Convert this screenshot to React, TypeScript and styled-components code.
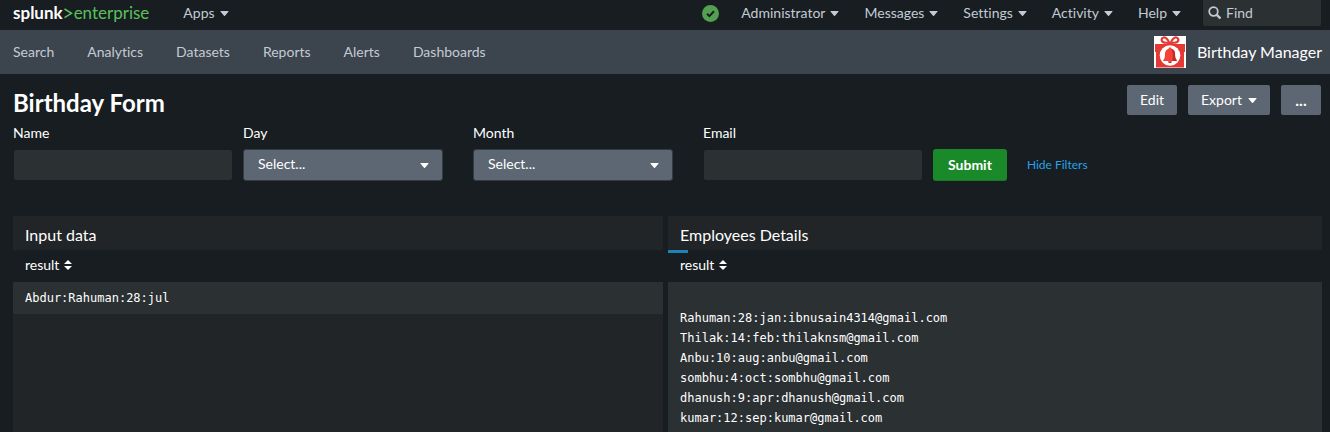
import React from 'react';
import styled, { createGlobalStyle } from 'styled-components';

const GlobalStyle = createGlobalStyle`
  * { box-sizing: border-box; }
  html { scrollbar-width: none; background: #171d21; }
  body { margin: 0; font-variant-ligatures: none; }
  body, button, input, select {
    font-family: Lato, "Liberation Sans", sans-serif;
    font-size: 14px;
    line-height: 20px;
  }
`;

const Page = styled.div`
  min-height: 100vh;
  display: flex;
  flex-direction: column;
  background: #171d21;
  color: #ffffff;
`;

const TopBar = styled.header`
  display: flex;
  justify-content: space-between;
  height: 30px;
  padding: 0 9px 0 13px;
  color: #c3cbd4;
`;

const BarGroup = styled.div<{ $gap: number }>`
  display: flex;
  align-items: center;
  gap: ${(p) => p.$gap}px;
  height: 26px;
`;

const Brand = styled.a`
  display: flex;
  align-items: center;
  font-size: 17px;
  line-height: 24px;
  color: #5cc05c;
  text-decoration: none;
`;

const BrandName = styled.strong`
  color: #ffffff;
  font-weight: 700;
`;

const MenuButton = styled.button`
  display: flex;
  align-items: center;
  gap: 5px;
  padding: 0;
  border: 0;
  background: none;
  color: inherit;
  font-variant-ligatures: none;
`;

const Health = styled.button`
  display: flex;
  padding: 0;
  border: 0;
  background: none;
`;

const FindBox = styled.label`
  display: flex;
  align-items: center;
  gap: 4px;
  width: 118px;
  height: 26px;
  padding-left: 5px;
  border-radius: 0 0 2px 2px;
  background: #2b3033;
`;

const FindInput = styled.input`
  flex: 1;
  min-width: 0;
  padding: 0;
  border: 0;
  outline: 0;
  background: none;
  color: inherit;
  &::placeholder { color: #c3cbd4; opacity: 1; }
`;

const AppBar = styled.div`
  display: flex;
  align-items: center;
  justify-content: space-between;
  height: 44px;
  padding: 0 8px 0 13px;
  background: #3c444d;
`;

const AppNav = styled.nav`
  display: flex;
  gap: 33px;
`;

const NavLink = styled.a`
  color: #c3cbd4;
  text-decoration: none;
`;

const AppName = styled.a`
  display: flex;
  align-items: center;
  gap: 11px;
  color: #ffffff;
  font-size: 16px;
  text-decoration: none;
`;

const TitleRow = styled.div`
  display: flex;
  align-items: center;
  justify-content: space-between;
  padding: 11px 9px 0 13px;
`;

const Title = styled.h1`
  margin: 0;
  padding-top: 6px;
  font-size: 24px;
  line-height: 24px;
  font-weight: 700;
`;

const Actions = styled.div`
  display: flex;
  gap: 11px;
`;

const ActionButton = styled.button<{ $strong?: boolean }>`
  display: flex;
  align-items: center;
  justify-content: center;
  gap: 6px;
  min-width: 40px;
  height: 30px;
  padding: 0 13px;
  border: 0;
  border-radius: 2px;
  background: #5c6773;
  color: #ffffff;
  font-weight: ${(p) => (p.$strong ? 700 : 400)};
  font-size: ${(p) => (p.$strong ? 16 : 14)}px;
`;

const Filters = styled.form`
  display: flex;
  align-items: flex-end;
  padding: 8px 13px 35px;
`;

const Field = styled.div`
  width: 230px;
`;

const FieldLabel = styled.label`
  display: block;
  margin-bottom: 6px;
`;

const TextInput = styled.input`
  display: block;
  width: 220px;
  height: 32px;
  padding: 0 8px;
  border: 1px solid #171d21;
  border-radius: 3px;
  background: #2b3033;
  color: #ffffff;
`;

const SelectWrap = styled.div`
  position: relative;
  width: 200px;
`;

const Select = styled.select`
  appearance: none;
  display: block;
  width: 100%;
  height: 32px;
  padding: 0 32px 2px 14px;
  border: 1px solid #333b43;
  border-radius: 3px;
  background: #5c6773;
  color: #ffffff;
`;

const SelectCaret = styled.span`
  position: absolute;
  top: 14px;
  right: 14px;
  display: flex;
  pointer-events: none;
`;

const Submit = styled.button`
  height: 32px;
  padding: 0 15px;
  border: 0;
  border-bottom: 1px solid #187a25;
  border-radius: 3px;
  background: #1a8929;
  color: #ffffff;
  font-weight: 700;
`;

const HideLink = styled.a`
  margin-left: 20px;
  font-size: 12px;
  line-height: 32px;
  color: #29a2e6;
  text-decoration: none;
`;

const Panels = styled.main`
  flex: 1;
  display: grid;
  grid-template-columns: 650fr 654fr;
  gap: 5px;
  padding: 0 8px 0 13px;
`;

const Panel = styled.section`
  background: #212527;
`;

const PanelTitle = styled.h2`
  margin: 0;
  padding: 9px 12px 5px;
  font-size: 16px;
  line-height: 20px;
  font-weight: 400;
`;

const PanelBody = styled.div`
  position: relative;
`;

const Progress = styled.div`
  position: absolute;
  top: 0;
  left: 0;
  width: 20px;
  height: 3px;
  background: #1e81b8;
`;

const Table = styled.table`
  width: 100%;
  border-collapse: collapse;
`;

const HeadCell = styled.th`
  padding: 5px 12px 7px;
  background: #171d21;
  text-align: left;
  font-weight: 400;
`;

const Cell = styled.td`
  padding: 6px 12px;
  background: #2b3033;
  font-family: "DejaVu Sans Mono", monospace;
  font-size: 12px;
  line-height: 20px;
  white-space: pre-line;
`;

const Caret = () => (
  <svg width="9" height="5" viewBox="0 0 9 5" fill="currentColor" aria-hidden="true">
    <path d="M1 0h7q.9 0 .4.700L5 4.700q-.5.500-1 0L.6.700Q.1 0 1 0z" />
  </svg>
);

const SortIcon = () => (
  <svg width="8" height="10" viewBox="0 0 8 10" fill="currentColor" aria-hidden="true">
    <path d="M4 0l4 4H0zM0 6h8L4 10z" />
  </svg>
);

const GiftIcon = () => (
  <svg width="32" height="32" viewBox="0 0 32 32" aria-hidden="true">
    <path fill="#fff" d="M0 0h32v32H0z" />
    <path fill="#e53935" d="M1 8h30v8h-1v15.500H2V16H1z" />
    <path
      fill="#fff"
      stroke="#e53935"
      strokeWidth="2.200"
      d="M15.500 7.500C14.500 4 11.800 1 9.500 1.500C6.800 2.200 7 6 10.500 6.600C12.500 6.900 14 6.500 15.500 7.500zM16.500 7.500C17.500 4 20.200 1 22.500 1.500C25.200 2.200 25 6 21.500 6.600C19.500 6.900 18 6.500 16.500 7.500z"
    />
    <circle cx="16" cy="19.500" r="10.300" fill="#fff" />
    <path fill="#f44336" d="M16 11.500c.9 0 1.400.5 1.400 1.300 2.500.7 3.600 2.700 3.600 5 0 3.700.4 4.900 1.700 6.200v.9H9.300V24c1.300-1.300 1.700-2.500 1.700-6.200 0-2.300 1.100-4.300 3.600-5 0-.8.500-1.300 1.400-1.300z" />
    <path fill="#c62828" d="M17.400 12.800c2.500.7 3.600 2.700 3.600 5 0 3.700.4 4.900 1.700 6.200v.9h-4.500c1.200-4 .8-8.500-.8-12.100zM14 25.200h4a2 2 0 0 1-4 0z" />
  </svg>
);

const menus = ['Administrator', 'Messages', 'Settings', 'Activity', 'Help'];
const navItems = ['Search', 'Analytics', 'Datasets', 'Reports', 'Alerts', 'Dashboards'];

const employees = `
Rahuman:28:jan:ibnusain4314@gmail.com
Thilak:14:feb:thilaknsm@gmail.com
Anbu:10:aug:anbu@gmail.com
sombhu:4:oct:sombhu@gmail.com
dhanush:9:apr:dhanush@gmail.com
kumar:12:sep:kumar@gmail.com`;

const ResultPanel = ({ title, value, loading }: { title: string; value: string; loading?: boolean }) => (
  <Panel>
    <PanelTitle>{title}</PanelTitle>
    <PanelBody>
      {loading && <Progress />}
      <Table>
        <thead>
          <tr>
            <HeadCell scope="col">
              <MenuButton type="button">result<SortIcon /></MenuButton>
            </HeadCell>
          </tr>
        </thead>
        <tbody>
          <tr><Cell>{value}</Cell></tr>
        </tbody>
      </Table>
    </PanelBody>
  </Panel>
);

const SelectField = ({ id, label }: { id: string; label: string }) => (
  <Field>
    <FieldLabel htmlFor={id}>{label}</FieldLabel>
    <SelectWrap>
      <Select id={id}><option>Select...</option></Select>
      <SelectCaret><Caret /></SelectCaret>
    </SelectWrap>
  </Field>
);

const TextField = ({ id, label }: { id: string; label: string }) => (
  <Field>
    <FieldLabel htmlFor={id}>{label}</FieldLabel>
    <TextInput id={id} type="text" />
  </Field>
);

export default function App() {
  return (
    <Page>
      <GlobalStyle />
      <TopBar>
        <BarGroup $gap={34}>
          <Brand href="#">
            <BrandName>splunk</BrandName>
            <svg width="11" height="14" viewBox="0 0 11 14" fill="none" stroke="currentColor" strokeWidth="1.500" aria-hidden="true">
              <path d="M1.500 3L8.500 7.300L1.500 11.600" />
            </svg>
            enterprise
          </Brand>
          <MenuButton type="button">Apps<Caret /></MenuButton>
        </BarGroup>
        <BarGroup $gap={22}>
          <Health type="button" aria-label="Health status">
            <svg width="17" height="17" viewBox="0 0 17 17" aria-hidden="true">
              <circle cx="8.500" cy="8.500" r="8.500" fill="#53a051" />
              <path d="M5 8.800l2.400 2.300L12 6.200" fill="none" stroke="#171d21" strokeWidth="2" />
            </svg>
          </Health>
          <BarGroup $gap={25}>
            {menus.map((m) => (
              <MenuButton key={m} type="button">{m}<Caret /></MenuButton>
            ))}
          </BarGroup>
          <FindBox>
            <svg width="14" height="14" viewBox="0 0 14 14" fill="none" stroke="currentColor" aria-hidden="true">
              <circle cx="5.500" cy="5.500" r="4.300" strokeWidth="1.700" />
              <path d="M8.800 8.800L12.500 12.500" strokeWidth="2.400" />
            </svg>
            <FindInput placeholder="Find" aria-label="Find" />
          </FindBox>
        </BarGroup>
      </TopBar>
      <AppBar>
        <AppNav>
          {navItems.map((n) => <NavLink key={n} href="#">{n}</NavLink>)}
        </AppNav>
        <AppName href="#"><GiftIcon />Birthday Manager</AppName>
      </AppBar>
      <TitleRow>
        <Title>Birthday Form</Title>
        <Actions>
          <ActionButton type="button">Edit</ActionButton>
          <ActionButton type="button">Export<Caret /></ActionButton>
          <ActionButton type="button" $strong>...</ActionButton>
        </Actions>
      </TitleRow>
      <Filters onSubmit={(e) => e.preventDefault()}>
        <TextField id="name" label="Name" />
        <SelectField id="day" label="Day" />
        <SelectField id="month" label="Month" />
        <TextField id="email" label="Email" />
        <Submit type="submit">Submit</Submit>
        <HideLink href="#">Hide Filters</HideLink>
      </Filters>
      <Panels>
        <ResultPanel title="Input data" value="Abdur:Rahuman:28:jul" />
        <ResultPanel title="Employees Details" value={employees} loading />
      </Panels>
    </Page>
  );
}
